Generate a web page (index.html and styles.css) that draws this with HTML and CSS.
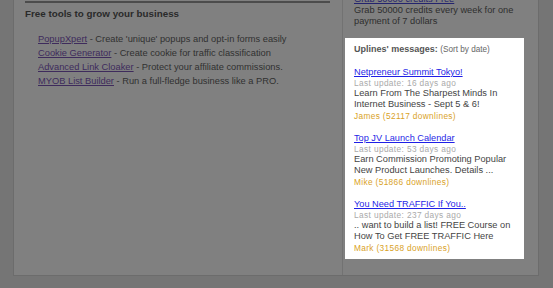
FILE: index.html
```html
<!DOCTYPE html>
<html>
<head>
<meta charset="utf-8">
<link rel="stylesheet" href="styles.css">
</head>
<body>
<div class="page">
  <div class="main">
    <div class="rule"></div>
    <h2 class="tools-title">Free tools to grow your business</h2>
    <ul class="tools">
      <li><a href="#">PopupXpert</a> - Create 'unique' popups and opt-in forms easily</li>
      <li><a href="#">Cookie Generator</a> - Create cookie for traffic classification</li>
      <li><a href="#">Advanced Link Cloaker</a> - Protect your affiliate commissions.</li>
      <li><a href="#">MYOB List Builder</a> - Run a full-fledge business like a PRO.</li>
    </ul>
  </div>
  <div class="side">
    <div class="promo">
      <a href="#" class="promo-link">Grab 50000 credits Free</a>
      <p>Grab 50000 credits every week for one payment of 7 dollars</p>
    </div>
    <div class="uplines">
      <div class="up-head"><b>Uplines' messages:</b> <span class="sort">(Sort by date)</span></div>
      <div class="msg">
        <a href="#" class="msg-title">Netpreneur Summit Tokyo!</a>
        <div class="msg-date">Last update: 16 days ago</div>
        <div class="msg-body">Learn From The Sharpest Minds In Internet Business - Sept 5 &amp; 6!</div>
        <div class="msg-author">James (52117 downlines)</div>
      </div>
      <div class="msg">
        <a href="#" class="msg-title">Top JV Launch Calendar</a>
        <div class="msg-date">Last update: 53 days ago</div>
        <div class="msg-body">Earn Commission Promoting Popular New Product Launches. Details ...</div>
        <div class="msg-author">Mike (51866 downlines)</div>
      </div>
      <div class="msg">
        <a href="#" class="msg-title">You Need TRAFFIC If You..</a>
        <div class="msg-date">Last update: 237 days ago</div>
        <div class="msg-body">.. want to build a list! FREE Course on How To Get FREE TRAFFIC Here</div>
        <div class="msg-author">Mark (31568 downlines)</div>
      </div>
    </div>
  </div>
</div>
</body>
</html>
```

FILE: styles.css
```css
html, body {
  margin: 0;
  padding: 0;
}
body {
  background: #757575;
  font-family: "Liberation Sans", Arial, sans-serif;
  overflow: hidden;
  height: 288px;
}
.page {
  margin: -8px 0 0 13px;
  width: 524px;
  height: 283px;
  background: #808080;
  border: 1px solid #6c6c6c;
  border-top: none;
  display: flex;
}
.main {
  width: 305px;
  padding: 9px 12px 0 11px;
  border-right: 1px solid #727272;
}
.rule {
  height: 2px;
  background: #4c4c4c;
}
.tools-title {
  margin: 3px 0 0;
  font-size: 9.8px;
  line-height: 16px;
  font-weight: bold;
  color: #2a2a2a;
}
.tools {
  list-style: none;
  margin: 10px 0 0;
  padding: 0 0 0 13px;
  font-size: 9.3px;
  line-height: 14px;
  color: #303030;
}
.tools a {
  color: #3e2b5c;
  text-decoration: underline;
}
.side {
  flex: 1;
  padding-left: 2px;
}
.promo {
  padding: 2px 9px 0 9px;
  font-size: 9.25px;
  line-height: 11px;
  color: #2e2e2e;
}
.promo-link {
  display: block;
  color: #24246e;
}
.promo p {
  margin: 0;
  line-height: 10.5px;
}
.uplines {
  margin-top: 12px;
  width: 161px;
  background: #fff;
  padding: 4px 9px 5px;
}
.up-head {
  font-size: 9px;
  line-height: 14px;
  color: #555;
  margin-bottom: 9px;
}
.up-head .sort {
  font-size: 8.2px;
  color: #666;
}
.msg + .msg {
  margin-top: 10px;
}
.msg-title {
  display: block;
  font-size: 9.2px;
  line-height: 12px;
  color: #1f1fe6;
  text-decoration: underline;
}
.msg-date {
  font-size: 8.3px;
  letter-spacing: 0.38px;
  line-height: 10px;
  color: #aaa;
}
.msg-body {
  font-size: 9.25px;
  line-height: 11px;
  color: #444;
}
.msg-author {
  font-size: 8.3px;
  letter-spacing: 0.35px;
  line-height: 12px;
  color: #d9a21f;
}
```
